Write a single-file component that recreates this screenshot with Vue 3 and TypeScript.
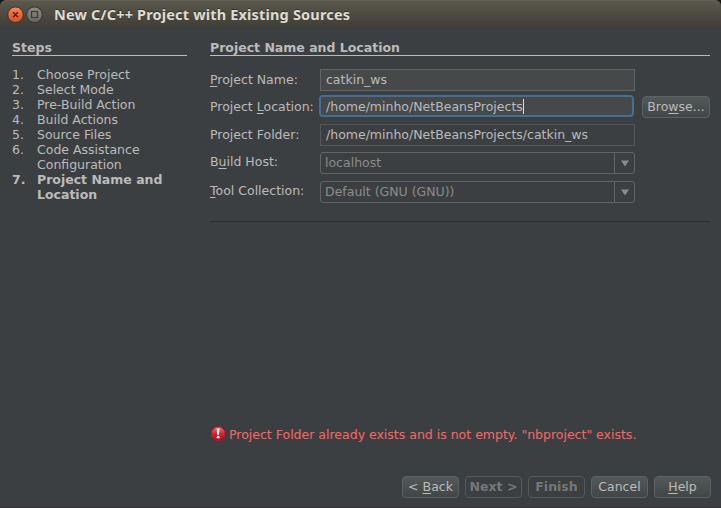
<script setup lang="ts">
interface Step { label: string; current?: boolean }
interface Part { text: string; key?: boolean }
interface Field { id: string; label: Part[]; value: string; kind: string }
interface Action { id: string; label: Part[]; disabled?: boolean }

const steps: Step[] = [
  { label: 'Choose Project' },
  { label: 'Select Mode' },
  { label: 'Pre-Build Action' },
  { label: 'Build Actions' },
  { label: 'Source Files' },
  { label: 'Code Assistance Configuration' },
  { label: 'Project Name and Location', current: true },
]

const fields: Field[] = [
  { id: 'name', label: [{ text: 'P', key: true }, { text: 'roject Name:' }], value: 'catkin_ws', kind: 'text' },
  { id: 'location', label: [{ text: 'Project ' }, { text: 'L', key: true }, { text: 'ocation:' }], value: '/home/minho/NetBeansProjects', kind: 'focused' },
  { id: 'folder', label: [{ text: 'Project Folder:' }], value: '/home/minho/NetBeansProjects/catkin_ws', kind: 'readonly' },
  { id: 'host', label: [{ text: 'B' }, { text: 'u', key: true }, { text: 'ild Host:' }], value: 'localhost', kind: 'combo' },
  { id: 'tools', label: [{ text: 'T', key: true }, { text: 'ool Collection:' }], value: 'Default (GNU (GNU))', kind: 'combo' },
]

const actions: Action[] = [
  { id: 'back', label: [{ text: '< ' }, { text: 'B', key: true }, { text: 'ack' }] },
  { id: 'next', label: [{ text: 'Next >' }], disabled: true },
  { id: 'finish', label: [{ text: 'Finish' }], disabled: true },
  { id: 'cancel', label: [{ text: 'Cancel' }] },
  { id: 'help', label: [{ text: 'H', key: true }, { text: 'elp' }] },
]
</script>

<template>
  <div class="window">
    <header class="titlebar">
      <svg class="controls" width="38" height="18" viewBox="0 0 38 18">
        <defs>
          <linearGradient id="close" x1="0" y1="0" x2="0" y2="1">
            <stop offset="0" stop-color="#f58a67" /><stop offset=".5" stop-color="#ed6439" /><stop offset="1" stop-color="#e2501f" />
          </linearGradient>
          <linearGradient id="max" x1="0" y1="0" x2="0" y2="1">
            <stop offset="0" stop-color="#8e8d84" /><stop offset="1" stop-color="#66655f" />
          </linearGradient>
        </defs>
        <circle cx="9.5" cy="8.7" r="7.8" fill="url(#close)" stroke="#35332d" />
        <path d="M7 6.2l5 5m0-5l-5 5" stroke="#4a2417" stroke-width="1.4" />
        <circle cx="28.5" cy="8.7" r="7.8" fill="url(#max)" stroke="#35332d" />
        <rect x="25.5" y="5.5" width="6" height="6" fill="none" stroke="#3b3a35" stroke-width="1.2" />
      </svg>
      <h1>New C/C++ Project with Existing Sources</h1>
    </header>

    <main class="content">
      <aside class="steps">
        <h2>Steps</h2>
        <ol>
          <li v-for="(step, i) in steps" :key="step.label" :class="{ current: step.current }">
            <span class="num">{{ i + 1 }}.</span><span class="label">{{ step.label }}</span>
          </li>
        </ol>
      </aside>

      <section class="panel">
        <h2>Project Name and Location</h2>
        <div class="form">
          <div v-for="field in fields" :key="field.id" class="row" :class="field.id">
            <label><span v-for="part in field.label" :key="part.text" :class="{ key: part.key }">{{ part.text }}</span></label>
            <div class="box" :class="field.kind">
              <span class="value">{{ field.value }}</span>
              <i v-if="field.kind === 'focused'" class="caret"></i>
              <span v-if="field.kind === 'combo'" class="arrow">
                <svg width="8" height="7" viewBox="0 0 8 7"><path d="M0 .5h8L4 6.5z" fill="#8b8b8b" /></svg>
              </span>
            </div>
            <button v-if="field.id === 'location'" class="button browse">Bro<span class="key">w</span>se...</button>
          </div>
        </div>
        <p class="error">
          <svg width="16" height="16" viewBox="0 0 16 16">
            <defs>
              <linearGradient id="err" x1="0" y1="0" x2="0" y2="1">
                <stop offset="0" stop-color="#ef7474" /><stop offset=".5" stop-color="#d32630" /><stop offset="1" stop-color="#b20d18" />
              </linearGradient>
            </defs>
            <path d="M5.5 1h5.5l4 4v5.5L11 14.5H5.5l-4-4V5z" fill="url(#err)" stroke="#b51620" stroke-linejoin="round" />
            <path d="M6.7 2.5h2.9L8.9 8.8H7.4z" fill="#fff" />
            <circle cx="8.15" cy="11.2" r="1.4" fill="#fff" />
          </svg>
          <span>Project Folder already exists and is not empty. "nbproject" exists.</span>
        </p>
      </section>
    </main>

    <footer class="actions">
      <button v-for="action in actions" :key="action.id" class="button" :class="action.id" :disabled="action.disabled"><span v-for="part in action.label" :key="part.text" :class="{ key: part.key }">{{ part.text }}</span></button>
    </footer>
  </div>
</template>

<style>
body { margin: 0; background: #171412; overflow: hidden; }
</style>

<style scoped>
* { box-sizing: border-box; }
.window {
  width: 721px; height: 508px; display: flex; flex-direction: column;
  background: #3c3f41; color: #bbbbbb; border-radius: 6px 6px 0 0; overflow: hidden;
  font: 12.5px/15px "DejaVu Sans", sans-serif;
  border-bottom: 1px solid #3a3436;
}
.titlebar {
  height: 28px; flex: none; display: flex; align-items: center; padding: 1px 0 0 6px;
  background: linear-gradient(#5b584c, #3e3d38); border-top: 1px solid #625f53;
}
h1 {
  margin: 0 0 0 10px; padding-bottom: 2px; font: bold 14.5px/20px "Noto Sans", sans-serif; letter-spacing: .17px;
  color: #dfdbd2; text-shadow: 0 -1px #33322c; white-space: nowrap;
}
.content { flex: 1; display: flex; padding: 12px 11px 0 12px; gap: 23px; }
.steps { width: 175px; flex: none; }
h2 {
  margin: 0; height: 16px; font-size: 12.5px; line-height: 15px; font-weight: bold;
  border-bottom: 1px solid #bbbbbb; white-space: nowrap;
}
ol { list-style: none; margin: 11px 0 0; padding: 0; }
li { display: flex; }
.num { width: 25px; flex: none; }
.label { width: 130px; }
.current { font-weight: bold; }
.panel { flex: 1; display: flex; flex-direction: column; }
.form { padding-top: 13px; height: 166px; border-bottom: 1px solid #2b2d2e; }
.row { display: flex; align-items: center; height: 22px; }
.row.location { margin-top: 4px; height: 24px; }
.row.folder { margin-top: 5px; }
.row.host { margin-top: 6px; }
.row.tools { margin-top: 7px; }
.row label { width: 110px; flex: none; white-space: nowrap; padding-bottom: 2px; }
.row.host label, .row.tools label { padding-bottom: 4px; }
.key { text-decoration: underline; text-decoration-thickness: 1px; text-underline-offset: 2px; }
.box {
  width: 315px; height: 22px; flex: none; display: flex; align-items: center;
  border: 1px solid #646464; padding-left: 5px; white-space: nowrap;
}
.value { padding-bottom: 2px; }
.text { background: #45494a; }
.row .focused { background: #45494a; border: 2px solid #466d94; border-radius: 4px; padding-left: 5px; margin: 0 1px 2px -1px; }
.focused .value { padding-bottom: 0; }
.readonly { border-color: #555758; }
.combo { border-radius: 3px; padding-left: 4px; color: #8c8c8c; }
.caret { width: 1px; height: 15px; background: #dddddd; }
.arrow { margin-left: auto; width: 20px; height: 20px; border-left: 1px solid #646464; display: flex; align-items: center; justify-content: center; padding-top: 1px; }
.arrow svg { flex: none; }
.button {
  width: 57px; height: 22px; padding: 0 0 2px; border: 1px solid #5d6162; border-radius: 4px;
  background: linear-gradient(#535859, #424647); color: #bbbbbb; font: inherit; white-space: pre;
}
.button:disabled { background: #3c3f41; color: #777777; font-weight: bold; border-color: #56595a; }
.browse { width: 68px; flex: none; margin-left: 7px; }
.error { margin: 204px 0 0; display: flex; align-items: center; gap: 3px; color: #ff6464; white-space: nowrap; }
.actions { height: 31px; flex: none; display: flex; justify-content: flex-end; gap: 6px; padding-right: 10px; }
</style>
